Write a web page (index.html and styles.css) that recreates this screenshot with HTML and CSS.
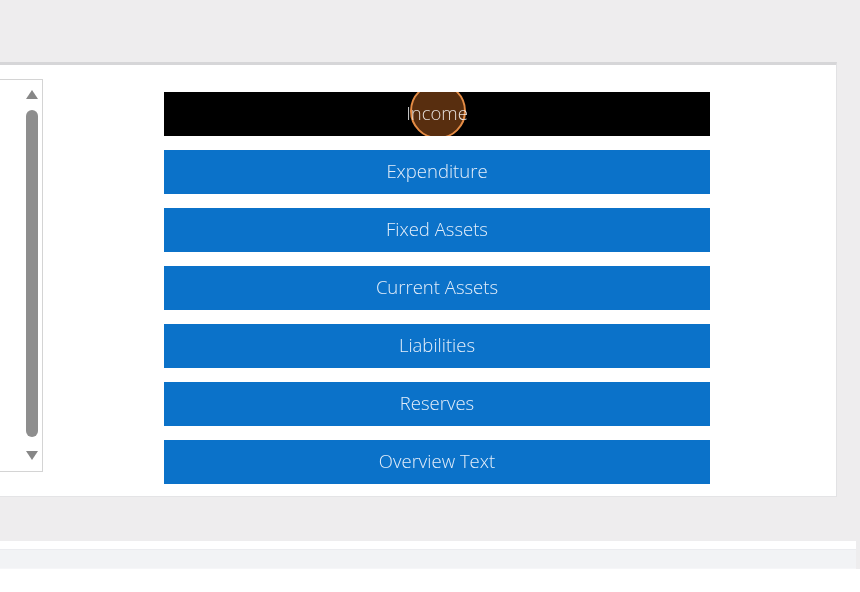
FILE: index.html
```html
<!DOCTYPE html>
<html>
<head>
<meta charset="utf-8">
<link rel="stylesheet" href="styles.css">
</head>
<body>
<div class="page">
  <div class="top-gap"></div>
  <div class="card">
    <div class="listbox">
      <div class="scrollbar">
        <span class="arrow up"></span>
        <span class="thumb"></span>
        <span class="arrow down"></span>
      </div>
    </div>
    <div class="menu">
      <button class="item active">Income</button>
      <button class="item">Expenditure</button>
      <button class="item">Fixed Assets</button>
      <button class="item">Current Assets</button>
      <button class="item">Liabilities</button>
      <button class="item">Reserves</button>
      <button class="item">Overview Text</button>
    </div>
    <span class="click-marker"></span>
  </div>
  <div class="gap"></div>
  <div class="strip"></div>
  <div class="footer"></div>
  <div class="bottom"></div>
</div>
</body>
</html>
```

FILE: styles.css
```css
html, body {
  margin: 0;
  padding: 0;
}
body {
  background: #ffffff;
  font-family: "Open Sans", "Liberation Sans", sans-serif;
  width: 860px;
  height: 592px;
  overflow: hidden;
}
.page {
  display: flex;
  flex-direction: column;
  background: #eeedee;
}
.top-gap {
  height: 62px;
}
.card {
  position: relative;
  width: 836px;
  height: 431px;
  background: #ffffff;
  border-top: 3px solid #d6d6d8;
  border-right: 1px solid #e2e2e4;
  border-bottom: 1px solid #e4e4e6;
  display: flex;
  align-items: flex-start;
}
.listbox {
  margin-top: 14px;
  width: 42px;
  height: 391px;
  border: 1px solid #d4d4d4;
  border-left: none;
  display: flex;
  justify-content: flex-end;
}
.scrollbar {
  width: 16px;
  margin-right: 2px;
  display: flex;
  flex-direction: column;
  align-items: center;
  padding-top: 10px;
}
.arrow {
  width: 0;
  height: 0;
  border-left: 6px solid transparent;
  border-right: 6px solid transparent;
}
.arrow.up {
  border-bottom: 9px solid #878787;
}
.arrow.down {
  border-top: 9px solid #878787;
  margin-top: 14px;
}
.thumb {
  margin-top: 11px;
  width: 12px;
  height: 327px;
  border-radius: 6px;
  background: #8e8e8e;
}
.menu {
  margin-top: 27px;
  margin-left: 121px;
  display: flex;
  flex-direction: column;
  gap: 14px;
}
.item {
  width: 546px;
  height: 44px;
  border: none;
  margin: 0;
  padding: 0 0 3px 0;
  background: #0b72c9;
  color: #e4eefa;
  font-family: "Open Sans", "Liberation Sans", sans-serif;
  font-size: 18.5px;
  font-weight: 300;
  text-align: center;
  letter-spacing: 0;
}
.item.active {
  background: #000000;
  color: #d8d8d8;
}
.click-marker {
  position: absolute;
  left: 410px;
  top: 18px;
  width: 52px;
  height: 52px;
  border-radius: 50%;
  border: 2px solid #e58c45;
  background: rgba(232, 122, 40, 0.38);
  mix-blend-mode: screen;
}
.gap {
  height: 44px;
}
.strip {
  height: 8px;
  background: #ffffff;
  width: 856px;
}
.footer {
  height: 18px;
  width: 856px;
  background: #f2f3f5;
  border-top: 1px solid #ebecef;
  border-bottom: 1px solid #f6f6f8;
}
.bottom {
  height: 30px;
  background: #ffffff;
}
```
